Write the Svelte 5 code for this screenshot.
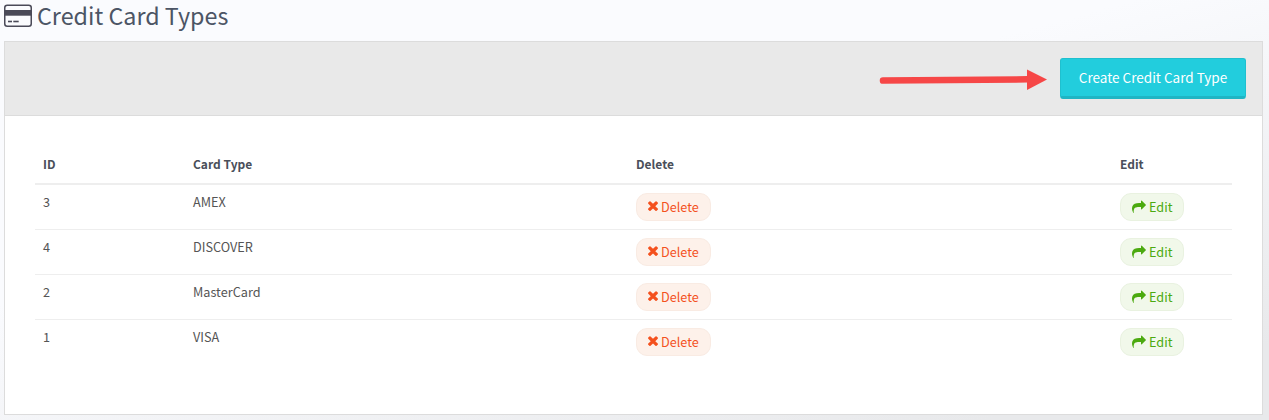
<script lang="ts">
  const rows = [
    { id: 3, type: "AMEX" },
    { id: 4, type: "DISCOVER" },
    { id: 2, type: "MasterCard" },
    { id: 1, type: "VISA" },
  ];
</script>

<div class="page">
  <h1>
    <svg class="card-icon" viewBox="0 0 28 23" aria-hidden="true">
      <rect x="0.75" y="1.25" width="26.5" height="21" rx="2.5" fill="none" stroke="#4a4a58" stroke-width="1.5" />
      <rect x="1" y="6" width="26" height="5.7" fill="#4a4a58" />
      <rect x="4" y="16.7" width="4" height="1.6" fill="#4a4a58" />
      <rect x="9.3" y="16.7" width="5.4" height="1.6" fill="#4a4a58" />
    </svg>
    Credit Card Types
  </h1>

  <section class="panel">
    <header>
      <svg class="arrow" width="168" height="24" viewBox="0 0 168 24" aria-hidden="true">
        <path d="M4 13.6 L149 12.3" stroke="#f64747" stroke-width="6.5" stroke-linecap="round" />
        <path d="M148 2.5 L168 12.5 L148 23 Z" fill="#f64747" />
      </svg>
      <button class="create">Create Credit Card Type</button>
    </header>

    <div class="body">
      <table>
        <colgroup>
          <col class="c-id" />
          <col class="c-type" />
          <col class="c-del" />
          <col />
        </colgroup>
        <thead>
          <tr>
            <th>ID</th>
            <th>Card Type</th>
            <th>Delete</th>
            <th>Edit</th>
          </tr>
        </thead>
        <tbody>
          {#each rows as row}
            <tr>
              <td>{row.id}</td>
              <td>{row.type}</td>
              <td>
                <span class="pill del">
                  <svg viewBox="0 0 1408 1792" aria-hidden="true">
                    <path d="M1298 1214q0 40-28 68l-136 136q-28 28-68 28t-68-28l-294-294-294 294q-28 28-68 28t-68-28l-136-136q-28-28-28-68t28-68l294-294-294-294q-28-28-28-68t28-68l136-136q28-28 68-28t68 28l294 294 294-294q28-28 68-28t68 28l136 136q28 28 28 68t-28 68l-294 294 294 294q28 28 28 68z" />
                  </svg>
                  Delete
                </span>
              </td>
              <td>
                <span class="pill edit">
                  <svg viewBox="0 0 1792 1792" aria-hidden="true">
                    <path d="M1792 640q0 26-19 45l-512 512q-19 19-45 19t-45-19-19-45v-256h-224q-98 0-175.5 6t-154 21.5-133 42.5-105.5 69.5-80 101-48.5 138.5-17.5 181q0 55 5 123 0 6 2.5 23.5t2.5 26.5q0 15-8.5 25t-23.5 10q-16 0-28-17-7-9-13-22t-13.5-30-10.5-24q-127-285-127-451 0-199 53-333 162-403 875-403h224v-256q0-26 19-45t45-19 45 19l512 512q19 19 19 45z" />
                  </svg>
                  Edit
                </span>
              </td>
            </tr>
          {/each}
        </tbody>
      </table>
    </div>
  </section>
</div>

<style>
  :global(body) {
    margin: 0;
    font-family: "Noto Sans CJK SC", "Source Sans Pro", "Noto Sans", sans-serif;
    font-size: 12.7px;
    color: #555;
  }

  .page {
    height: 420px;
    box-sizing: border-box;
    padding: 0 6px 0 4px;
    background: linear-gradient(165deg, #fafbfe 40%, #e8e9eb 90%);
  }

  h1 {
    display: flex;
    align-items: center;
    gap: 5px;
    margin: 0;
    height: 41px;
    padding-bottom: 10px;
    box-sizing: border-box;
    font-size: 23.3px;
    font-weight: 400;
    line-height: 31px;
    color: #4c5565;
  }

  .card-icon {
    width: 28px;
    height: 23px;
    flex: none;
  }

  .panel {
    background: #fff;
    border: 1px solid #dcdcdc;
    height: 374px;
    box-sizing: border-box;
  }

  header {
    display: flex;
    justify-content: flex-end;
    align-items: center;
    gap: 13px;
    height: 74px;
    box-sizing: border-box;
    padding: 0 16px 0 0;
    background: #e9e9e9;
    border-bottom: 1px solid #dcdcdc;
  }

  .arrow {
    flex: none;
    margin-top: 1px;
  }

  .create {
    width: 186px;
    height: 41px;
    padding: 0 0 2px;
    border: 1px solid #1fc0cf;
    border-bottom: 3px solid #1fb5c4;
    border-radius: 3px;
    background: #22cddd;
    color: #fff;
    font: inherit;
    font-size: 13.5px;
    line-height: 20px;
  }

  .body {
    padding: 31px 30px 0;
  }

  table {
    width: 1197px;
    border-collapse: collapse;
    table-layout: fixed;
  }

  .c-id {
    width: 150px;
  }

  .c-type {
    width: 443px;
  }

  .c-del {
    width: 484px;
  }

  th {
    height: 37px;
    padding: 0 8px 2px;
    box-sizing: border-box;
    text-align: left;
    font-size: 12px;
    font-weight: 700;
    color: #4a4f5a;
    line-height: 20px;
    border-bottom: 2px solid #eee;
  }

  td {
    padding: 7px 8px 8px;
    line-height: 20px;
    vertical-align: top;
    border-bottom: 1px solid #eee;
    color: #555;
  }

  tbody tr:last-child td {
    border-bottom: none;
  }

  .pill {
    display: inline-flex;
    align-items: center;
    height: 28px;
    margin-top: 1px;
    padding-bottom: 1px;
    box-sizing: border-box;
    border-radius: 11px;
    border: 1px solid;
    vertical-align: top;
  }

  .pill svg {
    fill: currentColor;
    flex: none;
  }

  .del {
    gap: 2px;
    padding-left: 10px;
    padding-right: 11px;
    background: #fdf1ea;
    border-color: #f9ebe3;
    color: #f4511e;
  }

  .del svg {
    width: 12px;
    height: 15px;
  }

  .edit {
    gap: 3px;
    padding-left: 11px;
    padding-right: 11px;
    background: #f1f8ea;
    border-color: #e9f2e0;
    color: #4caa10;
  }

  .edit svg {
    width: 14px;
    height: 14px;
  }
</style>
